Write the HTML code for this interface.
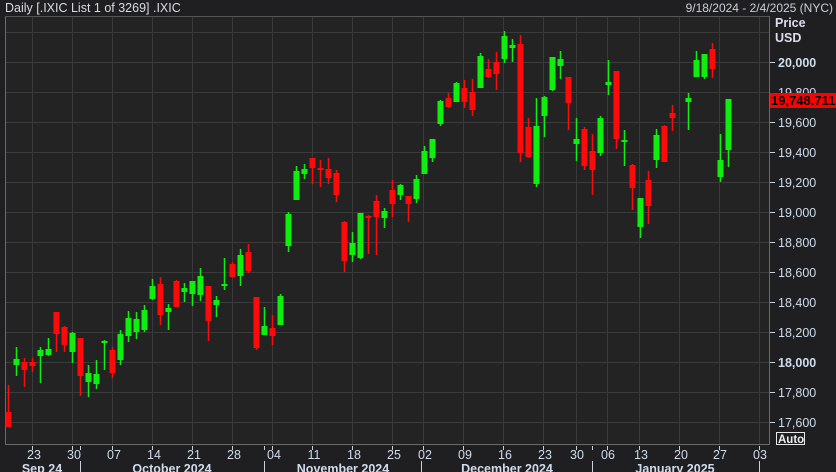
<!DOCTYPE html>
<html><head><meta charset="utf-8"><style>
html,body{margin:0;padding:0;background:#1f1f21;}
svg{display:block;font-family:"Liberation Sans",sans-serif;}
</style></head><body>
<svg width="836" height="472" viewBox="0 0 836 472" xmlns="http://www.w3.org/2000/svg">
<rect width="836" height="472" fill="#1f1f21"/>
<rect x="5" y="16" width="764" height="428" fill="#232323"/>
<g stroke="#3a3a3a" stroke-width="1">
<line x1="5" x2="769" y1="32.5" y2="32.5"/><line x1="5" x2="769" y1="62.5" y2="62.5"/><line x1="5" x2="769" y1="92.5" y2="92.5"/><line x1="5" x2="769" y1="122.5" y2="122.5"/><line x1="5" x2="769" y1="152.5" y2="152.5"/><line x1="5" x2="769" y1="182.5" y2="182.5"/><line x1="5" x2="769" y1="212.5" y2="212.5"/><line x1="5" x2="769" y1="242.5" y2="242.5"/><line x1="5" x2="769" y1="272.5" y2="272.5"/><line x1="5" x2="769" y1="302.5" y2="302.5"/><line x1="5" x2="769" y1="332.5" y2="332.5"/><line x1="5" x2="769" y1="362.5" y2="362.5"/><line x1="5" x2="769" y1="392.5" y2="392.5"/><line x1="5" x2="769" y1="422.5" y2="422.5"/>
<line y1="16" y2="444" x1="32.5" x2="32.5"/><line y1="16" y2="444" x1="72.5" x2="72.5"/><line y1="16" y2="444" x1="112.5" x2="112.5"/><line y1="16" y2="444" x1="152.5" x2="152.5"/><line y1="16" y2="444" x1="192.5" x2="192.5"/><line y1="16" y2="444" x1="232.5" x2="232.5"/><line y1="16" y2="444" x1="272.5" x2="272.5"/><line y1="16" y2="444" x1="312.5" x2="312.5"/><line y1="16" y2="444" x1="352.5" x2="352.5"/><line y1="16" y2="444" x1="392.5" x2="392.5"/><line y1="16" y2="444" x1="423.5" x2="423.5"/><line y1="16" y2="444" x1="463.5" x2="463.5"/><line y1="16" y2="444" x1="503.5" x2="503.5"/><line y1="16" y2="444" x1="543.5" x2="543.5"/><line y1="16" y2="444" x1="576.5" x2="576.5"/><line y1="16" y2="444" x1="607.5" x2="607.5"/><line y1="16" y2="444" x1="639.5" x2="639.5"/><line y1="16" y2="444" x1="679.5" x2="679.5"/><line y1="16" y2="444" x1="719.5" x2="719.5"/><line y1="16" y2="444" x1="759.5" x2="759.5"/>
</g>
<g stroke="#6a6a6a" fill="none"><path d="M5.5 16 V444.5 H769.5 V16"/><line x1="5" x2="769" y1="16.5" y2="16.5" stroke="#555"/></g>

<path fill="none" stroke="#ff0a0a" stroke-width="1.5" d="M8.5 385V427M24.5 358V387M32.5 358V372M56.5 312V352M64.5 326V352M80.5 338V396M112.5 347V378M160.5 277V325M176.5 280V306M208.5 286V341M232.5 262V278M248.5 244V273M256.5 297V350M272.5 315V345M312.5 158V184M320.5 160V187M328.5 158V184M336.5 170V202M344.5 221V272M368.5 215V254M376.5 195V255M392.5 180V217M408.5 196V222M448.5 93V108M464.5 80V108M472.5 79V116M488.5 59V78M496.5 52V90M520.5 35V162M528.5 118V158M568.5 77V130M584.5 127V170M592.5 134V195M616.5 71V149M632.5 164V210M648.5 171V224M664.5 125V162M672.5 105V131M712.5 43V78"/>
<path fill="none" stroke="#ff0a0a" stroke-width="6" d="M8.5 412V427M24.5 362V370M32.5 362V366M56.5 312V334M64.5 327V345M80.5 338V376M112.5 350V373M160.5 284V315M176.5 281V307M208.5 286V321M232.5 264V277M248.5 252V271M256.5 297V348M272.5 328V336M312.5 158V168M320.5 168V170M328.5 169V178M336.5 173V195M344.5 222V261M368.5 216V218M376.5 201V217M392.5 190V204M408.5 196V204M448.5 98V107M464.5 88V102M472.5 92V110M488.5 69V77M496.5 62V74M520.5 44V153M528.5 127V157M568.5 77V103M584.5 129V166M592.5 151V170M616.5 71V139M632.5 165V188M648.5 180V206M664.5 126V162M672.5 113V118M712.5 49V69"/>
<path fill="none" stroke="#10ee10" stroke-width="1.5" d="M16.5 347V376M40.5 347V383M48.5 338V356M72.5 332V363M88.5 365V397M96.5 360V389M104.5 340V370M120.5 330V365M128.5 311V342M136.5 312V339M144.5 305V332M152.5 279V300M168.5 304V330M184.5 283V302M192.5 281V306M200.5 268V301M216.5 296V317M224.5 258V290M240.5 249V286M264.5 307V335M280.5 294V325M288.5 212V252M296.5 166V200M304.5 164V179M352.5 232V262M360.5 213V259M384.5 208V228M400.5 184V200M416.5 175V203M424.5 146V174M432.5 139V162M440.5 100V126M456.5 82V102M480.5 53V88M504.5 31V63M512.5 39V62M536.5 98V187M544.5 96V137M552.5 57V91M560.5 51V79M576.5 118V161M600.5 116V156M608.5 60V95M624.5 130V166M640.5 198V238M656.5 129V168M688.5 93V130M696.5 51V77M704.5 54V79M720.5 134V182M728.5 99V167"/>
<path fill="none" stroke="#10ee10" stroke-width="6" d="M16.5 359V365M40.5 350V356M48.5 349V355M72.5 333V352M88.5 373V382M96.5 374V384M104.5 341V343M120.5 334V360M128.5 318V336M136.5 319V332M144.5 310V330M152.5 286V299M168.5 308V312M184.5 288V292M192.5 281V294M200.5 276V295M216.5 300V305M224.5 284V286M240.5 255V276M264.5 326V335M280.5 296V325M288.5 214V246M296.5 171V200M304.5 169V174M352.5 243V255M360.5 213V258M384.5 211V218M400.5 185V195M416.5 179V199M424.5 151V174M432.5 139V158M440.5 101V124M456.5 83V102M480.5 56V88M504.5 36V59M512.5 45V48M536.5 126V184M544.5 97V116M552.5 57V90M560.5 59V66M576.5 139V144M600.5 118V153M608.5 82V85M624.5 140V142M640.5 198V227M656.5 135V160M688.5 98V102M696.5 60V77M704.5 54V77M720.5 160V177M728.5 99V150"/>

<g font-size="12.5" fill="#d0dcec">
<text x="5" y="12" fill="#d8dce2">Daily [.IXIC List 1 of 3269] .IXIC</text>
<text x="833" y="12" text-anchor="end" font-size="12" fill="#c8d0dc">9/18/2024 - 2/4/2025 (NYC)</text>
<text x="775" y="27" font-weight="bold" fill="#dde">Price</text>
<text x="775" y="42" font-weight="bold" fill="#dde">USD</text>
</g>
<g stroke="#c8d0dc"><line x1="770" x2="775" y1="62.5" y2="62.5"/><line x1="770" x2="775" y1="122.5" y2="122.5"/><line x1="770" x2="775" y1="152.5" y2="152.5"/><line x1="770" x2="775" y1="182.5" y2="182.5"/><line x1="770" x2="775" y1="212.5" y2="212.5"/><line x1="770" x2="775" y1="242.5" y2="242.5"/><line x1="770" x2="775" y1="272.5" y2="272.5"/><line x1="770" x2="775" y1="302.5" y2="302.5"/><line x1="770" x2="775" y1="332.5" y2="332.5"/><line x1="770" x2="775" y1="362.5" y2="362.5"/><line x1="770" x2="775" y1="392.5" y2="392.5"/><line x1="770" x2="775" y1="422.5" y2="422.5"/></g>
<g font-size="12.5" fill="#d0dcec">
<text x="778" y="67" font-weight="bold">20,000</text>
<text x="778" y="97">19,800</text>
<text x="778" y="127">19,600</text>
<text x="778" y="157">19,400</text>
<text x="778" y="187">19,200</text>
<text x="778" y="217">19,000</text>
<text x="778" y="247">18,800</text>
<text x="778" y="277">18,600</text>
<text x="778" y="307">18,400</text>
<text x="778" y="337">18,200</text>
<text x="778" y="367" font-weight="bold">18,000</text>
<text x="778" y="397">17,800</text>
<text x="778" y="427">17,600</text>
</g>
<rect x="770" y="93" width="66" height="15" fill="#ff0000"/>
<text x="771" y="105" font-size="13" font-weight="bold" fill="#000">19,748.711</text>
<rect x="776.5" y="432.5" width="28" height="12" fill="none" stroke="#e8e8e8"/>
<text x="778" y="443" font-size="11.5" font-weight="bold" fill="#eee">Auto</text>
<g stroke="#c8d0dc"><line x1="32.5" x2="32.5" y1="446" y2="450"/><line x1="72.5" x2="72.5" y1="446" y2="450"/><line x1="80.5" x2="80.5" y1="446" y2="450"/><line x1="112.5" x2="112.5" y1="446" y2="450"/><line x1="152.5" x2="152.5" y1="446" y2="450"/><line x1="192.5" x2="192.5" y1="446" y2="450"/><line x1="232.5" x2="232.5" y1="446" y2="450"/><line x1="264.5" x2="264.5" y1="446" y2="450"/><line x1="272.5" x2="272.5" y1="446" y2="450"/><line x1="312.5" x2="312.5" y1="446" y2="450"/><line x1="352.5" x2="352.5" y1="446" y2="450"/><line x1="392.5" x2="392.5" y1="446" y2="450"/><line x1="423.5" x2="423.5" y1="446" y2="450"/><line x1="463.5" x2="463.5" y1="446" y2="450"/><line x1="503.5" x2="503.5" y1="446" y2="450"/><line x1="543.5" x2="543.5" y1="446" y2="450"/><line x1="576.5" x2="576.5" y1="446" y2="450"/><line x1="592.5" x2="592.5" y1="446" y2="450"/><line x1="607.5" x2="607.5" y1="446" y2="450"/><line x1="639.5" x2="639.5" y1="446" y2="450"/><line x1="679.5" x2="679.5" y1="446" y2="450"/><line x1="719.5" x2="719.5" y1="446" y2="450"/><line x1="759.5" x2="759.5" y1="446" y2="450"/>
<line x1="80.5" x2="80.5" y1="461" y2="472"/><line x1="264.5" x2="264.5" y1="461" y2="472"/><line x1="421.5" x2="421.5" y1="461" y2="472"/><line x1="592.5" x2="592.5" y1="461" y2="472"/><line x1="759.5" x2="759.5" y1="461" y2="472"/></g>
<g font-size="12.5" fill="#d0dcec" text-anchor="middle">
<text x="34" y="459">23</text><text x="74" y="459">30</text><text x="114" y="459">07</text><text x="154" y="459">14</text><text x="194" y="459">21</text><text x="234" y="459">28</text><text x="274" y="459">04</text><text x="314" y="459">11</text><text x="354" y="459">18</text><text x="394" y="459">25</text><text x="425" y="459">02</text><text x="465" y="459">09</text><text x="505" y="459">16</text><text x="545" y="459">23</text><text x="577" y="459">30</text><text x="608" y="459">06</text><text x="641" y="459">13</text><text x="681" y="459">20</text><text x="720" y="459">27</text><text x="760" y="459">03</text>
</g>
<g font-size="12.5" font-weight="bold" fill="#d0dcec" text-anchor="middle">
<text x="42" y="473">Sep 24</text><text x="172" y="473">October 2024</text><text x="343" y="473">November 2024</text><text x="507" y="473">December 2024</text><text x="675" y="473">January 2025</text>
</g>
</svg>
</body></html>
